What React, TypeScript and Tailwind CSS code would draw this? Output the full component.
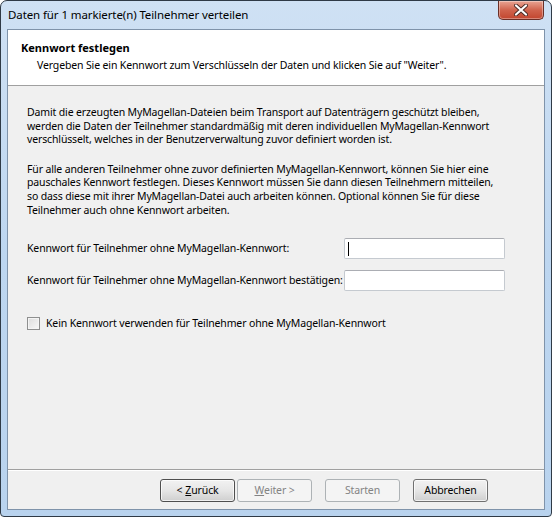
import React from "react";

const font = { fontFamily: '"Noto Sans", "Open Sans", sans-serif' };

function CloseButton() {
  return (
    <div className="ml-auto mr-[7px] self-start w-[46px] h-[19px] rounded-b-[5px] border border-t-0 border-[#6a2f27] bg-gradient-to-b from-[#e8a493] via-[#d0634d] to-[#c2452e] flex items-center justify-center shadow-[inset_0_0_0_1px_rgba(255,255,255,0.35)]">
      <svg width="14" height="12" viewBox="0 0 14 12">
        <path
          d="M2 1.5 L12 10.5 M12 1.5 L2 10.5"
          stroke="#4a2a24"
          strokeWidth="4"
          strokeLinecap="round"
        />
        <path
          d="M2 1.5 L12 10.5 M12 1.5 L2 10.5"
          stroke="#ffffff"
          strokeWidth="2.2"
          strokeLinecap="round"
        />
      </svg>
    </div>
  );
}

function Button({
  children,
  disabled,
  focused,
}: {
  children: React.ReactNode;
  disabled?: boolean;
  focused?: boolean;
}) {
  if (disabled) {
    return (
      <div className="w-[75px] h-[23px] rounded-[3px] border border-[#adb2b5] bg-[#f4f4f4] text-[#838383] flex items-center justify-center">
        {children}
      </div>
    );
  }
  return (
    <div
      className={
        "w-[75px] h-[23px] rounded-[3px] border bg-gradient-to-b from-[#f2f2f2] via-[#e6e6e6] to-[#cfcfcf] text-black flex items-center justify-center shadow-[inset_0_0_0_1px_rgba(255,255,255,0.7)] " +
        (focused ? "border-[#4f4f4f]" : "border-[#707070]")
      }
    >
      {children}
    </div>
  );
}

function Field({ label, caret }: { label: string; caret?: boolean }) {
  return (
    <div className="flex items-center h-[21px]">
      <span className="w-[317px] whitespace-nowrap">{label}</span>
      <div className="w-[161px] h-[21px] rounded-[2px] border border-[#c5cad0] border-t-[#abadb3] bg-white flex items-center pl-[3px]">
        {caret && <div className="w-px h-[14px] bg-black" />}
      </div>
    </div>
  );
}

export default function App() {
  return (
    <div
      style={font}
      className="w-[552px] h-[517px] rounded-t-[7px] rounded-b-[4px] border border-[#2f3a46] bg-gradient-to-b from-[#cfe1f4] via-[#bdd6f0] to-[#b9d3ee] flex flex-col text-[10.5px] tracking-[-0.14px] text-black"
    >
      <div className="h-[28px] flex items-start">
        <span className="pl-[7px] pt-[5px] text-[11.5px] tracking-[-0.1px] text-black">
          Daten für 1 markierte(n) Teilnehmer verteilen
        </span>
        <CloseButton />
      </div>

      <div className="mx-[6px] mb-[6px] flex-1 border border-[#7f93aa] bg-[#f0f0f0] flex flex-col">
        <div className="h-[56px] bg-white border-b border-[#a0a0a0] pl-[13px] pt-[10px]">
          <div className="font-bold text-[11px] tracking-normal leading-[15px]">Kennwort festlegen</div>
          <div className="pl-[16px] pt-[3px] leading-[15px]">
            Vergeben Sie ein Kennwort zum Verschlüsseln der Daten und klicken Sie auf "Weiter".
          </div>
        </div>

        <div className="flex-1 pl-[19px] pt-[20px] leading-[13.6px]">
          <p>
            Damit die erzeugten MyMagellan-Dateien beim Transport auf Datenträgern geschützt bleiben,
            <br />
            werden die Daten der Teilnehmer standardmäßig mit deren individuellen MyMagellan-Kennwort
            <br />
            verschlüsselt, welches in der Benutzerverwaltung zuvor definiert worden ist.
          </p>
          <p className="mt-[16px]">
            Für alle anderen Teilnehmer ohne zuvor definierten MyMagellan-Kennwort, können Sie hier eine
            <br />
            pauschales Kennwort festlegen. Dieses Kennwort müssen Sie dann diesen Teilnehmern mitteilen,
            <br />
            so dass diese mit ihrer MyMagellan-Datei auch arbeiten können. Optional können Sie für diese
            <br />
            Teilnehmer auch ohne Kennwort arbeiten.
          </p>

          <div className="mt-[21px] flex flex-col gap-[11px]">
            <Field label="Kennwort für Teilnehmer ohne MyMagellan-Kennwort:" caret />
            <Field label="Kennwort für Teilnehmer ohne MyMagellan-Kennwort bestätigen:" />
          </div>

          <div className="mt-[26px] flex items-center gap-[6px]">
            <div className="w-[13px] h-[13px] border border-[#8e8f8f] bg-gradient-to-br from-[#dcdcdc] to-[#f8f8f8] shadow-[inset_0_0_0_1px_#f4f4f4]" />
            <span>Kein Kennwort verwenden für Teilnehmer ohne MyMagellan-Kennwort</span>
          </div>
        </div>

        <div className="h-[40px] border-t border-[#a0a0a0] shadow-[inset_0_1px_0_#ffffff] flex items-start pt-[9px] pl-[152px]">
          <Button focused>
            &lt; <span className="underline ml-[3px]">Z</span>urück
          </Button>
          <div className="ml-[2px]">
            <Button disabled>
              <span className="underline">W</span>eiter &gt;
            </Button>
          </div>
          <div className="ml-[13px]">
            <Button disabled>Starten</Button>
          </div>
          <div className="ml-[13px]">
            <Button>Abbrechen</Button>
          </div>
        </div>
      </div>
    </div>
  );
}
